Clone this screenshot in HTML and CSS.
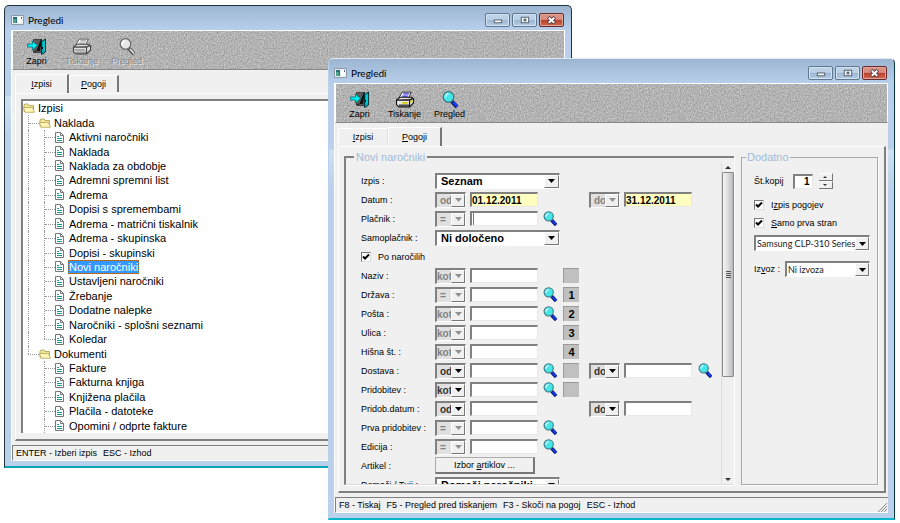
FILE: index.html
```html
<!DOCTYPE html>
<html lang="sl">
<head>
<meta charset="utf-8">
<title>Pregledi</title>
<link rel="stylesheet" href="styles.css">
</head>
<body>
<svg class="defs" aria-hidden="true">
  <symbol id="i-app" viewBox="0 0 13 10">
    <path fill="#e9eef2" stroke="#8d9aa6" d="M.5.5h12v9H.5z"/>
    <path fill="#2b6f7c" d="M2 2h4v6H2z"/><path fill="#4fa58b" d="M2 4h3v4H2z"/><path fill="#fff" d="M7 2h4v6H7z"/><path fill="#4b6b9a" d="M10 2h1v2h-1z"/>
  </symbol>
  <symbol id="i-door" viewBox="0 0 20 17">
    <path fill="#5a5a5a" stroke="#444" d="M6.500 1.500h8v13h-8z"/>
    <path fill="#111" d="M6 13h7l2-12h-1l-5 13z"/>
    <path fill="#00a7b0" stroke="#00353c" d="M14.500 3.500l4-2.500v13l-4 2.500z"/>
    <path fill="#00c8d0" d="M16 4l2-1v9l-2 1z"/><path fill="#000" d="M15 9h1v2h-1z"/>
    <path fill="#00f0f0" stroke="#00707a" stroke-width=".8" d="M.5 6h5v-3l5 4.500-5 4.500v-3h-5z"/>
  </symbol>
  <symbol id="i-printer" viewBox="0 0 17 15">
    <path fill="#fff" stroke="#222" stroke-width=".8" d="M6 1h8l-2.500 5.500H3z"/>
    <path stroke="#2a2af0" d="M7 2.500h5M6 4.500h5"/>
    <path fill="#e8e8e8" stroke="#111" d="M1 8l3-2.500h10.500l1.500 1.500v3.500L12.500 14H3L1 12z"/>
    <path fill="#777" stroke="#111" d="M1 8h11.500L16 6.500M12.500 8v6"/>
    <path stroke="#d8d000" stroke-width="1.500" d="M6 10.500h5M13 10l2.500-1.500"/><path stroke="#111" d="M3 12.500h9"/>
  </symbol>
  <symbol id="i-printer-off" viewBox="0 0 17 15">
    <path fill="#fff" stroke="#555" stroke-width=".8" d="M6 1h8l-2.500 5.500H3z"/>
    <path stroke="#999" d="M7 2.500h5M6 4.500h5"/>
    <path fill="#e4e4e4" stroke="#444" d="M1 8l3-2.500h10.500l1.500 1.500v3.500L12.500 14H3L1 12z"/>
    <path fill="#999" stroke="#444" d="M1 8h11.500L16 6.500M12.500 8v6"/>
    <path stroke="#888" d="M2 10.500h9M3 12.500h9"/>
  </symbol>
  <symbol id="i-lens" viewBox="0 0 16 17">
    <path stroke="#001a70" stroke-width="4" d="M10 10.500l5 5.500"/>
    <path stroke="#1c3cff" stroke-width="2" d="M11 11l4 4.500"/>
    <circle cx="6.500" cy="6" r="5.300" fill="#45e6e8" stroke="#3c7480" stroke-width="1.200"/>
    <path fill="none" stroke="#d8ffff" stroke-width="1.500" d="M3.500 6.500a3 3 0 0 1 3-3.500"/>
  </symbol>
  <symbol id="i-lens-off" viewBox="0 0 16 17">
    <path stroke="#555" stroke-width="4" d="M10 10.500l5 5.500"/>
    <path stroke="#eee" stroke-width="1.500" d="M11 11l4 4.500"/>
    <circle cx="6.500" cy="6" r="5.300" fill="#e6e6e6" stroke="#666" stroke-width="1.200"/>
    <path fill="none" stroke="#fff" stroke-width="1.500" d="M3.500 6.500a3 3 0 0 1 3-3.500"/>
  </symbol>
  <symbol id="i-folder" viewBox="0 0 12 10">
    <path fill="#f4e795" stroke="#a89a55" stroke-width=".8" d="M1 8.500v-6.500l1-1h3l1 1.500h4.500v6z"/>
    <path fill="#fff6b4" stroke="#b3a55e" stroke-width=".8" d="M.5 4.500h9l2 4.800H2z"/>
  </symbol>
  <symbol id="i-doc" viewBox="0 0 9 11">
    <path fill="#fff" stroke="#777" d="M.5.5h5l3 3v7h-8z"/><path fill="none" stroke="#777" d="M5.500.5v3h3"/>
    <path stroke="#1a9a94" d="M2 4.500h2M2 6.500h5M2 8.500h5"/>
  </symbol>
  <symbol id="i-min" viewBox="0 0 24 13"><rect x="8.500" y="6.500" width="8" height="3" fill="#fff" stroke="#4d5a68"/></symbol>
  <symbol id="i-max" viewBox="0 0 24 13"><rect x="8.500" y="3.500" width="8" height="6" fill="#fff" stroke="#4d5a68"/><rect x="11.500" y="5.500" width="2" height="2" fill="#9bb6d2" stroke="#4d5a68"/></symbol>
  <symbol id="i-close" viewBox="0 0 24 13"><path stroke="#4b3438" stroke-width="4" d="M8.500 3.500l7 6.500M15.500 3.500l-7 6.500"/><path stroke="#fff" stroke-width="2.200" d="M9 4l6 5.500M15 4L9 9.500"/></symbol>
</svg>

<main class="desktop">
  <section class="window back" aria-label="Pregledi - Izpisi">
    <header class="titlebar">
      <svg class="app"><use href="#i-app"/></svg><h1>Pregledi</h1>
      <button class="cap" aria-label="Pomanjšaj"><svg><use href="#i-min"/></svg></button>
      <button class="cap" aria-label="Povečaj"><svg><use href="#i-max"/></svg></button>
      <button class="cap close" aria-label="Zapri okno"><svg><use href="#i-close"/></svg></button>
    </header>
    <div class="client">
      <div class="toolbar">
        <button><svg><use href="#i-door"/></svg>Zapri</button>
        <button disabled><svg><use href="#i-printer-off"/></svg>Tiskanje</button>
        <button disabled><svg><use href="#i-lens-off"/></svg>Pregled</button>
      </div>
      <div class="tabs">
        <button class="tab on"><u>I</u>zpisi</button>
        <button class="tab"><u>P</u>ogoji</button>
      </div>
      <div class="page">
        <ul class="tree">
          <li class="root"><svg class="folder"><use href="#i-folder"/></svg><span>Izpisi</span></li>
          <li class="group"><i class="tee"></i><svg class="folder"><use href="#i-folder"/></svg><span>Naklada</span></li>
          <li><i class="bar"></i><i class="tee"></i><svg class="doc"><use href="#i-doc"/></svg><span>Aktivni naročniki</span></li>
          <li><i class="bar"></i><i class="tee"></i><svg class="doc"><use href="#i-doc"/></svg><span>Naklada</span></li>
          <li><i class="bar"></i><i class="tee"></i><svg class="doc"><use href="#i-doc"/></svg><span>Naklada za obdobje</span></li>
          <li><i class="bar"></i><i class="tee"></i><svg class="doc"><use href="#i-doc"/></svg><span>Adremni spremni list</span></li>
          <li><i class="bar"></i><i class="tee"></i><svg class="doc"><use href="#i-doc"/></svg><span>Adrema</span></li>
          <li><i class="bar"></i><i class="tee"></i><svg class="doc"><use href="#i-doc"/></svg><span>Dopisi s spremembami</span></li>
          <li><i class="bar"></i><i class="tee"></i><svg class="doc"><use href="#i-doc"/></svg><span>Adrema - matrični tiskalnik</span></li>
          <li><i class="bar"></i><i class="tee"></i><svg class="doc"><use href="#i-doc"/></svg><span>Adrema - skupinska</span></li>
          <li><i class="bar"></i><i class="tee"></i><svg class="doc"><use href="#i-doc"/></svg><span>Dopisi - skupinski</span></li>
          <li><i class="bar"></i><i class="tee"></i><svg class="doc"><use href="#i-doc"/></svg><span class="selected">Novi naročniki</span></li>
          <li><i class="bar"></i><i class="tee"></i><svg class="doc"><use href="#i-doc"/></svg><span>Ustavljeni naročniki</span></li>
          <li><i class="bar"></i><i class="tee"></i><svg class="doc"><use href="#i-doc"/></svg><span>Žrebanje</span></li>
          <li><i class="bar"></i><i class="tee"></i><svg class="doc"><use href="#i-doc"/></svg><span>Dodatne nalepke</span></li>
          <li><i class="bar"></i><i class="tee"></i><svg class="doc"><use href="#i-doc"/></svg><span>Naročniki - splošni seznami</span></li>
          <li><i class="bar"></i><i class="tee end"></i><svg class="doc"><use href="#i-doc"/></svg><span>Koledar</span></li>
          <li class="group"><i class="tee end"></i><svg class="folder"><use href="#i-folder"/></svg><span>Dokumenti</span></li>
          <li><i></i><i class="tee"></i><svg class="doc"><use href="#i-doc"/></svg><span>Fakture</span></li>
          <li><i></i><i class="tee"></i><svg class="doc"><use href="#i-doc"/></svg><span>Fakturna knjiga</span></li>
          <li><i></i><i class="tee"></i><svg class="doc"><use href="#i-doc"/></svg><span>Knjižena plačila</span></li>
          <li><i></i><i class="tee"></i><svg class="doc"><use href="#i-doc"/></svg><span>Plačila - datoteke</span></li>
          <li><i></i><i class="tee"></i><svg class="doc"><use href="#i-doc"/></svg><span>Opomini / odprte fakture</span></li>
        </ul>
      </div>
      <footer class="status"><span>ENTER - Izberi izpis</span><span>ESC - Izhod</span></footer>
    </div>
  </section>

  <section class="window front" aria-label="Pregledi - Pogoji">
    <header class="titlebar">
      <svg class="app"><use href="#i-app"/></svg><h1>Pregledi</h1>
      <button class="cap" aria-label="Pomanjšaj"><svg><use href="#i-min"/></svg></button>
      <button class="cap" aria-label="Povečaj"><svg><use href="#i-max"/></svg></button>
      <button class="cap close" aria-label="Zapri okno"><svg><use href="#i-close"/></svg></button>
    </header>
    <div class="client">
      <div class="toolbar">
        <button><svg><use href="#i-door"/></svg>Zapri</button>
        <button><svg><use href="#i-printer"/></svg>Tiskanje</button>
        <button><svg><use href="#i-lens"/></svg>Pregled</button>
      </div>
      <div class="tabs">
        <button class="tab"><u>I</u>zpisi</button>
        <button class="tab on"><u>P</u>ogoji</button>
      </div>
      <div class="page">
        <fieldset class="box conditions">
          <legend>Novi naročniki</legend>
          <div class="scroller">
            <div class="fields">
              <div class="row"><label for="izpis">Izpis :</label><span class="combo wide"><select id="izpis"><option>Seznam</option></select></span></div>
              <div class="row"><label for="datum">Datum :</label><span class="combo op"><select disabled aria-label="Datum pogoj"><option>od</option></select></span><input class="text date" id="datum" value="01.12.2011"><span class="combo op to"><select disabled aria-label="Datum do pogoj"><option>do</option></select></span><input class="text date" aria-label="Datum do" value="31.12.2011"></div>
              <div class="row"><label for="placnik">Plačnik :</label><span class="combo op"><select disabled aria-label="Plačnik pogoj"><option>=</option></select></span><input class="text caret" id="placnik"><button class="find" aria-label="Išči plačnika"><svg><use href="#i-lens"/></svg></button></div>
              <div class="row"><label for="samo">Samoplačnik :</label><span class="combo wide"><select id="samo"><option>Ni določeno</option></select></span></div>
              <div class="row"><label class="check"><input type="checkbox" checked>Po naročilih</label></div>
              <div class="row"><label for="naziv">Naziv :</label><span class="combo op long"><select disabled aria-label="Naziv pogoj"><option>kot</option></select></span><input class="text" id="naziv"><span class="key"></span></div>
              <div class="row"><label for="drzava">Država :</label><span class="combo op"><select disabled aria-label="Država pogoj"><option>=</option></select></span><input class="text" id="drzava"><button class="find" aria-label="Išči državo"><svg><use href="#i-lens"/></svg></button><span class="key">1</span></div>
              <div class="row"><label for="posta">Pošta :</label><span class="combo op long"><select disabled aria-label="Pošta pogoj"><option>kot</option></select></span><input class="text" id="posta"><button class="find" aria-label="Išči pošto"><svg><use href="#i-lens"/></svg></button><span class="key">2</span></div>
              <div class="row"><label for="ulica">Ulica :</label><span class="combo op long"><select disabled aria-label="Ulica pogoj"><option>kot</option></select></span><input class="text" id="ulica"><span class="key">3</span></div>
              <div class="row"><label for="hisna">Hišna št. :</label><span class="combo op long"><select disabled aria-label="Hišna št. pogoj"><option>kot</option></select></span><input class="text" id="hisna"><span class="key">4</span></div>
              <div class="row"><label for="dostava">Dostava :</label><span class="combo op"><select aria-label="Dostava pogoj"><option>od</option></select></span><input class="text" id="dostava"><button class="find" aria-label="Išči dostavo"><svg><use href="#i-lens"/></svg></button><span class="key"></span><span class="combo op to"><select aria-label="Dostava do pogoj"><option>do</option></select></span><input class="text" aria-label="Dostava do"><button class="find last" aria-label="Išči dostavo do"><svg><use href="#i-lens"/></svg></button></div>
              <div class="row"><label for="prid">Pridobitev :</label><span class="combo op long"><select aria-label="Pridobitev pogoj"><option>kot</option></select></span><input class="text" id="prid"><button class="find" aria-label="Išči pridobitev"><svg><use href="#i-lens"/></svg></button><span class="key"></span></div>
              <div class="row"><label for="pdat">Pridob.datum :</label><span class="combo op"><select aria-label="Pridob.datum pogoj"><option>od</option></select></span><input class="text" id="pdat"><span class="combo op to"><select aria-label="Pridob.datum do pogoj"><option>do</option></select></span><input class="text" aria-label="Pridob.datum do"></div>
              <div class="row"><label for="prva">Prva pridobitev :</label><span class="combo op"><select disabled aria-label="Prva pridobitev pogoj"><option>=</option></select></span><input class="text" id="prva"><button class="find" aria-label="Išči prvo pridobitev"><svg><use href="#i-lens"/></svg></button></div>
              <div class="row"><label for="edicija">Edicija :</label><span class="combo op"><select disabled aria-label="Edicija pogoj"><option>=</option></select></span><input class="text" id="edicija"><button class="find" aria-label="Išči edicijo"><svg><use href="#i-lens"/></svg></button></div>
              <div class="row"><label for="artikel">Artikel :</label><button class="push" id="artikel">Izbor <u>a</u>rtiklov ...</button></div>
              <div class="row"><label for="tuji">Domači / Tuji :</label><span class="combo wide"><select id="tuji"><option>Domači naročniki</option></select></span></div>
            </div>
            <div class="scrollbar" aria-hidden="true"><span class="arrow up"></span><span class="thumb"></span><span class="arrow"></span></div>
          </div>
        </fieldset>
        <fieldset class="box extra">
          <legend>Dodatno</legend>
          <div class="options">
            <div class="line"><label for="kopij">Št.kopij</label><input class="text copies" id="kopij" value="1"><span class="spin"><button aria-label="Več"><span class="arrow up"></span></button><button aria-label="Manj"><span class="arrow"></span></button></span></div>
            <label class="check"><input type="checkbox" checked><span>I<u>z</u>pis pogojev</span></label>
            <label class="check"><input type="checkbox" checked><span><u>S</u>amo prva stran</span></label>
            <span class="combo light"><select aria-label="Tiskalnik"><option>Samsung CLP-310 Series</option></select></span>
            <div class="line export"><label for="izvoz">Iz<u>v</u>oz :</label><span class="combo light"><select id="izvoz"><option>Ni izvoza</option></select></span></div>
          </div>
        </fieldset>
      </div>
      <footer class="status"><span>F8 - Tiskaj</span><span>F5 - Pregled pred tiskanjem</span><span>F3 - Skoči na pogoj</span><span>ESC - Izhod</span><svg class="grip" viewBox="0 0 10 10"><path stroke="#888" d="M1 10l9-9M4 10l6-6M7 10l3-3"/></svg></footer>
    </div>
  </section>
</main>
</body>
</html>
```

FILE: styles.css
```css
:root {
  --face: #f0f0f0;
  --dark: #808080;
  --ui: "Liberation Sans", sans-serif;
}
* { box-sizing: border-box; }
body {
  margin: 0;
  background: #fff;
  color: #000;
  font: 9px/14px var(--ui);
}
button, input, select { font: inherit; color: inherit; margin: 0; padding: 0; border: 0; border-radius: 0; }
.defs { display: none; }
svg { display: block; flex: none; }
.desktop { position: relative; min-height: 100vh; overflow: hidden; }

/* windows */
.window {
  position: absolute;
  display: flex;
  flex-direction: column;
  padding: 0 6px 5px;
  background: linear-gradient(#9cb5d1, #b7cfea 24px, #b9d1ea 90px, #cfe0f2 91px, #b9d1ea 130px);
  border: 1px solid #24333f;
  border-bottom: 2px solid #0aa5b5;
  border-radius: 5px 5px 0 0;
}
.back { inset: 5px 328px 55px 4px; }
.front {
  inset: 58px 5px 3px 328px;
  padding-left: 5px;
  border-left-color: #b9d1ea;
  border-top-color: #dce8f4;
  border-right-color: #0a3a48;
  border-bottom-color: #04b8cc;
}
.titlebar { display: flex; align-items: center; height: 24px; padding: 3px 1px 0 0; }
.app { width: 13px; height: 10px; }
.titlebar h1 { flex: 1; margin: 0 0 0 4px; font: 10px/16px Lato, sans-serif; }
.cap {
  width: 25px; height: 14px; margin-left: 2px;
  border: 1px solid #5f7690; border-radius: 2px;
  box-shadow: inset 0 0 0 1px #d5e4f3;
  background: linear-gradient(#bdd1e6 45%, #9bb7d4 50%, #b5cce4);
}
.cap svg { width: 23px; height: 12px; }
.close { border-color: #6a2a2a; box-shadow: inset 0 0 0 1px #e0a79c; background: linear-gradient(#d98f82 45%, #b8402c 50%, #cf6a50); }
.client { flex: 1; min-height: 0; display: flex; flex-direction: column; background: var(--face); border-left: 1px solid #fff; }

.toolbar {
  flex: none; display: flex; height: 40px; padding: 7px 1px 0;
  border: 1px solid #fff; border-bottom: 1px solid #888;
  background: #b2b2b2 url("data:image/svg+xml,%3Csvg xmlns='http://www.w3.org/2000/svg' width='200' height='80'%3E%3Cfilter id='n' x='0' y='0' width='1' height='1' color-interpolation-filters='sRGB'%3E%3CfeTurbulence type='fractalNoise' baseFrequency='.7' numOctaves='1' seed='9' result='t'/%3E%3CfeColorMatrix in='t' type='matrix' values='.4 0 0 0 .5 .4 0 0 0 .5 .4 0 0 0 .5 0 0 0 0 1'/%3E%3C/filter%3E%3Crect width='200' height='80' filter='url(%23n)'/%3E%3C/svg%3E");
}
.toolbar button {
  display: flex; flex-direction: column; align-items: center;
  width: 45px; background: none; line-height: 12px;
}
.toolbar svg { width: 20px; height: 17px; }
.toolbar button:disabled { color: #858585; text-shadow: 1px 1px #e6e6e6; }

.tabs { flex: none; display: flex; align-items: flex-end; height: 23px; padding: 0 3px; }
.tab {
  height: 17px; min-width: 50px; margin-bottom: 1px; background: var(--face); text-align: center;
  border: 1px solid #fff; border-bottom: 0; border-right-color: #ddd;
}
.tab.on { height: 19px; min-width: 54px; margin-bottom: 0; border-right: 2px solid #777; }
.back .tab { border-right: 2px solid #777; }
.page {
  flex: 1; min-height: 0; display: flex; margin: 0 2px 4px 3px; padding: 5px 6px 6px 5px;
  border: 1px solid #fff; border-right: 2px solid var(--dark); border-bottom: 2px solid var(--dark);
}
.front .page { padding-top: 4px; }
.status {
  flex: none; display: flex; gap: 6px; height: 16px; padding: 0 3px; line-height: 15px;
  border-top: 1px solid var(--dark); border-left: 1px solid var(--dark); border-bottom: 1px solid #fff;
}
.grip { width: 10px; height: 10px; margin: 4px -2px 0 auto; }

/* tree */
.tree {
  flex: 1; display: grid; grid-auto-rows: 1fr; margin: 0; padding: 0; list-style: none;
  background: #fff; font: 11px/14px var(--ui); overflow: hidden;
  border-left: 2px solid var(--dark); border-top: 2px solid var(--dark);
}
.tree li { display: flex; align-items: center; min-height: 0; padding-left: 5px; }
.tree li.root { padding-left: 0; }
.tree i { position: relative; flex: none; width: 16px; align-self: stretch; }
.tree .bar, .tree .tee { border-left: 1px dotted #999; }
.tree .tee { width: 11px; }
.tree .tee::after { content: ""; position: absolute; left: 0; right: 0; top: 50%; border-top: 1px dotted #999; }
.tree .end { border-left: 0; }
.tree .end::before { content: ""; position: absolute; left: 0; top: 0; bottom: 50%; border-left: 1px dotted #999; }
.folder { width: 12px; height: 10px; margin-right: 2px; }
.doc { width: 9px; height: 11px; margin-right: 4px; }
.tree span { padding: 0 1px; white-space: nowrap; }
.tree .selected { background: #3399ff; color: #fff; outline: 1px dotted #a85a14; outline-offset: -1px; }

/* group boxes */
.box { display: flex; min-width: 0; min-height: 0; margin: 0; padding: 0; border: 1px solid #a8a8a8; box-shadow: 1px 1px #fff; }
.box legend { margin-left: 8px; padding: 0 2px; color: #a3bbd6; font: 11px/12px var(--ui); }
.conditions { flex: 1; border: 2px solid var(--dark); border-right: 0; border-bottom: 1px solid #ddd; }
.extra { flex: none; width: 137px; margin-left: 7px; }
.extra legend { margin-left: 4px; padding: 0 1px; }
.scroller { flex: 1; min-width: 0; display: flex; overflow: hidden; }
.fields { flex: 1; min-width: 0; padding: 8px 0 0 15px; height: 0; }
.row {
  display: grid; align-items: center; height: 19px;
  grid-template-columns: 74px 35px 73px 20px 26px 35px 74px 14px;
}
.row > * { grid-row: 1; }
.row > label { grid-column: 1; white-space: nowrap; }
.op { grid-column: 2; }
.row .text { grid-column: 3; }
.find { grid-column: 4; }
.key { grid-column: 5; }
.to { grid-column: 6; }
.row .to + .text { grid-column: 7; }
.find.last { grid-column: 8; }
.combo {
  position: relative; display: block; height: 16px; width: 31px; background: #fff;
  border: 1px solid #fff; border-top: 2px solid var(--dark); border-left: 2px solid var(--dark);
}
.combo select {
  display: block; width: 100%; height: 100%; padding-left: 4px; appearance: none; background: none;
  font: bold 11px/13px var(--ui); opacity: 1;
}
.combo::after {
  content: ""; position: absolute; right: 0; top: 0; bottom: 0; width: 13px; pointer-events: none;
  border: 1px solid #fff; border-right-color: #777; border-bottom-color: #777;
  background: var(--face) url("data:image/svg+xml,%3Csvg xmlns='http://www.w3.org/2000/svg' width='7' height='4'%3E%3Cpath d='M0 0h7L3.500 4z'/%3E%3C/svg%3E") center no-repeat;
}
.wide { grid-column: 2 / 5; width: 125px; }
.combo.op { background: #e0e0e0; }
.op select { padding-left: 3px; font-size: 10px; color: #333; text-overflow: clip; }
.op.long select { padding-left: 0; }
.op select:disabled { color: #808080; }
.op:has(:disabled)::after { background-image: url("data:image/svg+xml,%3Csvg xmlns='http://www.w3.org/2000/svg' width='7' height='4'%3E%3Cpath fill='%23909090' d='M0 0h7L3.500 4z'/%3E%3C/svg%3E"); }
.combo.op::after, .combo.light::after { width: 12px; }
.light { width: auto; }
.light select { padding-left: 1px; font: 9px/13px Lato, sans-serif; color: #222; }
.text {
  width: 68px; height: 15px; background: #fff; font: bold 10px/12px var(--ui);
  border: 1px solid #e8e8e8; border-top: 2px solid var(--dark); border-left: 2px solid var(--dark);
}
.date { background: #ffffc0; }
.caret { background: linear-gradient(#777, #777) 1px 0 / 1px 12px no-repeat #fff; }
.find { width: 14px; height: 15px; background: none; }
.find svg { width: 14px; height: 15px; }
.key { width: 16px; height: 15px; background: #c0c0c0; border-top: 1px solid #999; border-left: 1px solid #999; font: bold 11px/14px var(--ui); text-align: center; }
.push { grid-column: 2 / 5; width: 100px; height: 17px; background: var(--face); line-height: 13px; border: 1px solid #aaa; border-right: 2px solid #777; border-bottom: 2px solid #777; }
.check { display: flex; align-items: center; gap: 7px; }
.check input {
  appearance: none; width: 10px; height: 10px; border: 1px solid #ddd; border-top-color: #777; border-left-color: #777;
  background: #fff;
}
.check input:checked { background-image: url("data:image/svg+xml,%3Csvg xmlns='http://www.w3.org/2000/svg' width='8' height='8'%3E%3Cpath fill='none' stroke='%23000' stroke-width='2' d='M1 3.500l2 2L7 1.500'/%3E%3C/svg%3E"); }

.scrollbar { flex: none; width: 13px; display: flex; flex-direction: column; align-items: center; border-left: 1px solid #ddd; }
.arrow { width: 0; border: 3px solid transparent; border-top: 3px solid #333; border-bottom: 0; }
.arrow.up { border-top: 0; border-bottom: 3px solid #333; }
.scrollbar .arrow { margin: 3px 0; }
.thumb {
  flex: none; width: 12px; height: 64%; border: 1px solid #888; border-radius: 1px;
  background:
    repeating-linear-gradient(#555 0 1px, transparent 1px 2px) center / 5px 7px no-repeat,
    linear-gradient(90deg, #f4f4f4, #dcdcdf 50%, #b8b8be);
}
.scrollbar .arrow:last-child { margin-top: auto; }

.options { flex: 1; min-width: 0; display: flex; flex-direction: column; padding: 9px 7px 0 12px; }
.line { display: flex; align-items: center; height: 18px; }
.copies { width: 20px; margin-left: 9px; text-align: right; padding-right: 2px; }
.spin { display: flex; flex-direction: column; margin-left: 6px; width: 14px; }
.spin button { display: flex; align-items: center; justify-content: center; height: 8px; background: var(--face); border-right: 1px solid #777; border-bottom: 1px solid #777; border-top: 1px solid #fff; }
.spin .arrow { border-left-width: 2px; border-right-width: 2px; border-top-width: 2px; }
.spin .arrow.up { border-top: 0; border-bottom-width: 2px; }
.options .check { height: 18px; }
.options .line + .check { margin-top: 6px; }
.options > .combo { margin-top: 3px; }
.export { margin-top: 9px; gap: 5px; }
.export .combo { flex: 1; }
```
